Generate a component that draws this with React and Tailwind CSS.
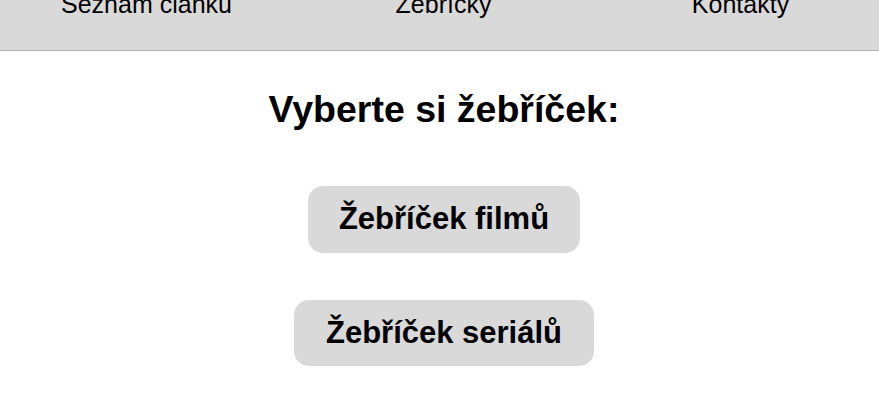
import React from "react";

export default function App() {
  const links = ["Seznam článků", "Žebříčky", "Kontakty"];

  return (
    <div
      className="h-[417px] w-[879px] overflow-hidden bg-white text-black"
      style={{ fontFamily: '"Liberation Sans", Arial, sans-serif' }}
    >
      {/* horní menu (stránka je odscrollovaná) */}
      <nav className="h-[51px] overflow-hidden border-b border-[#b4b4b4] bg-[#d9d9d9]">
        <ul className="-mt-[10px] -ml-[2px] flex w-[891px]">
          {links.map((l) => (
            <li key={l} className="w-[297px] text-center text-[25px] leading-[28px]">
              {l}
            </li>
          ))}
        </ul>
      </nav>

      <main className="flex flex-col items-center pl-[9px]">
        <h1 className="mt-[37px] text-[37.5px] font-bold leading-[42px]">
          Vyberte si žebříček:
        </h1>
        <button className="mt-[56px] h-[67px] rounded-[15px] bg-[#d9d9d9] px-[31px] text-[31px] font-bold">
          Žebříček filmů
        </button>
        <button className="mt-[47px] h-[66px] rounded-[15px] bg-[#d9d9d9] px-[32px] text-[31px] font-bold">
          Žebříček seriálů
        </button>
      </main>
    </div>
  );
}
